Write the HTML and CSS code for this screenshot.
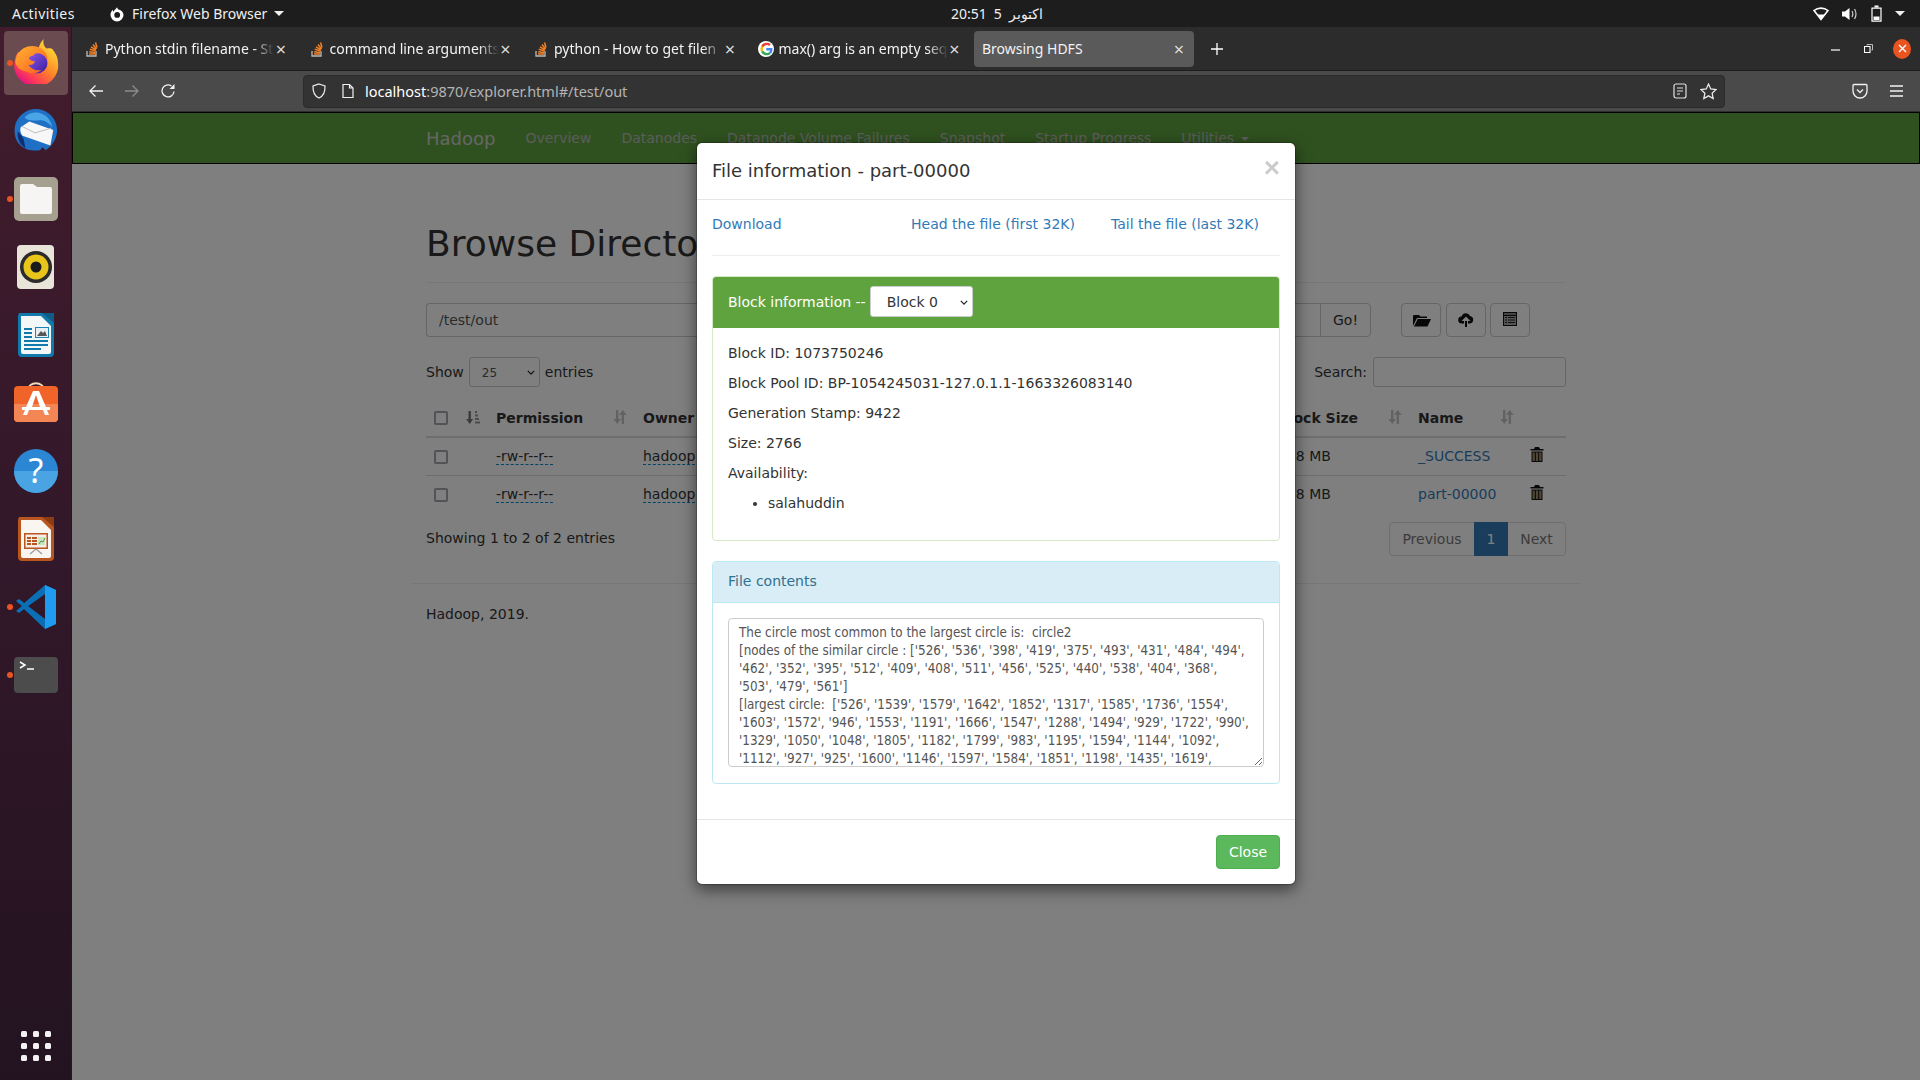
FILE: index.html
```html
<!DOCTYPE html>
<html lang="en">
<head>
<meta charset="utf-8">
<title>Browsing HDFS</title>
<link rel="stylesheet" href="styles.css">
</head>
<body>
<header class="topbar">
  <span class="activities">Activities</span>
  <span class="appmenu">
    <svg class="appicon" viewBox="0 0 16 16"><path fill="#fff" d="M8 1.2c.6 1 .5 1.700 1.500 2.200 3 .7 5 2.800 5 5.600a6.500 6.500 0 0 1-13 0c0-2.300 1-4 2.400-5.200-.1 1 .1 1.600.6 2 .5-1.500 2-2.500 3.500-4.600zM8.200 6a2.900 2.900 0 1 0 0 5.800 2.900 2.900 0 0 0 0-5.800z"/></svg>
    <span>Firefox Web Browser</span>
    <span class="tri"></span>
  </span>
  <span class="clock"><span>20:51</span><span>5</span><span dir="rtl">اكتوبر</span></span>
  <span class="status">
    <svg class="st-wifi" viewBox="0 0 16 14"><path fill="none" stroke="#fff" stroke-width="1.600" d="M1 3.500C5 .3 11 .3 15 3.500L8 12.500z"/><path fill="#fff" d="M4.500 7.500h7L8 12.500z"/></svg>
    <svg class="st-vol" viewBox="0 0 16 14"><path fill="#fff" d="M1 4.500h3L8.500 1v12L4 9.500H1z"/><path fill="none" stroke="#ccc" stroke-width="1.200" d="M11 4c1 1.800 1 4.200 0 6M13.500 2c1.800 3 1.800 7 0 10"/></svg>
    <svg class="st-bat" viewBox="0 0 11 17"><path fill="none" stroke="#fff" stroke-width="1.200" d="M1 3.200h9v13H1z"/><path fill="#fff" d="M3.500.5h4v2h-4zM2.500 11.500h6v3.500h-6z"/></svg>
    <span class="tri"></span>
  </span>
</header>

<div class="desktop">
  <nav class="dock">
    <div class="dock-item dock-active"><i class="dot"></i>
      <svg class="ic-46" viewBox="0 0 48 48">
        <defs>
          <linearGradient id="ff1" x1="0.800" y1="0.100" x2="0.200" y2="0.900"><stop offset="0" stop-color="#ffd93a"/><stop offset=".45" stop-color="#ff8a25"/><stop offset=".8" stop-color="#ff3d55"/><stop offset="1" stop-color="#e3177e"/></linearGradient>
          <linearGradient id="ff2" x1="0" y1="0" x2="1" y2="1"><stop offset="0" stop-color="#8f5cf0"/><stop offset="1" stop-color="#3b1a9c"/></linearGradient>
          <linearGradient id="ff3" x1="0" y1="0" x2="1" y2="1"><stop offset="0" stop-color="#ffb52e"/><stop offset="1" stop-color="#ff5a24"/></linearGradient>
        </defs>
        <path fill="url(#ff1)" d="M32 1c-1 5 .5 8 3 10 2.500-.5 5-.5 6 .5 4 5 6 9 6 14.500a23 22 0 1 1-45-3c.5-4 2-7 4-9 0 2 .5 3 1.500 4 2-4 6-7 11-8 3-.5 6 0 8 .5C28 7 29 4 32 1z"/>
        <circle cx="25" cy="26" r="11" fill="url(#ff2)"/>
        <path fill="url(#ff3)" d="M2.500 25c.5-6 3.500-11 9-14.500 5-3 12-3 17 0 5 3 8 8 7.500 13-2-4-5-7-10-7.500-2.500 0-4.500 1-5 2.500-4 .5-4.500 2-4 3.500 1 2 4 2 6 2.500-1 3-4 4-7 3.500 3 5 9 7 14 5-4 4-11 5-17 2C6 33 3 29 2.500 25z"/>
      </svg>
    </div>
    <div class="dock-item">
      <svg class="ic-46" viewBox="0 0 48 48">
        <path fill="#1f6fc4" d="M24 1c12 0 22 10 22 22 0 9-5 17-12 21l-3-3-3 3c-7 1-15 0-20-5-6-5-7-13-6-20C4 9 13 1 24 1z"/>
        <path fill="#0f2f73" d="M5 24c-1 8 2 14 8 18l-2-10z"/>
        <path fill="#4aa5e6" d="M12 10c4-5 12-7 18-4 6 2 10 8 11 14-4-5-9-8-15-7-5 0-10 1-14-3z"/>
        <path fill="#f7f7f7" d="M8 20l9-6 25 9-3 16-29-10c-2-2-3-6-2-9z"/>
        <path fill="none" stroke="#bbb" d="M9 19l14 7 17-5"/>
      </svg>
    </div>
    <div class="dock-item"><i class="dot"></i>
      <svg class="ic-46" viewBox="0 0 46 46">
        <rect x="1" y="1" width="44" height="44" rx="5" fill="#a5a08f"/>
        <path fill="#f6f5f3" d="M7 10a2 2 0 0 1 2-2h11l4 3h13a2 2 0 0 1 2 2v23a2 2 0 0 1-2 2H9a2 2 0 0 1-2-2z"/>
      </svg>
    </div>
    <div class="dock-item">
      <svg class="ic-46" viewBox="0 0 46 46">
        <rect x="4" y="1" width="37" height="44" rx="4" fill="#e8e4d8"/>
        <circle cx="23" cy="23" r="16" fill="#2b2b2b"/>
        <circle cx="23" cy="23" r="12.500" fill="#e9c41a"/>
        <circle cx="23" cy="23" r="5.500" fill="#1b1b1b"/>
      </svg>
    </div>
    <div class="dock-item">
      <svg class="ic-46" viewBox="0 0 46 46">
        <path fill="#1279ad" d="M6 1h26l9 9v31a4 4 0 0 1-4 4H9a4 4 0 0 1-4-4V4z"/>
        <path fill="#0d5d86" d="M29 1h12v10z"/>
        <path fill="#f4f7f8" d="M8 4h20l10 10v26a2 2 0 0 1-2 2H10a2 2 0 0 1-2-2z"/>
        <path fill="#1279ad" d="M11 16h8v2h-8zM11 20h8v2h-8zM11 24h8v2h-8zM11 28h24v2H11zM11 32h24v2H11zM11 36h17v2H11z"/>
        <path fill="#1b85b8" d="M22 15h14v11H22z"/><path fill="#e8eef1" d="M23 16h12v9H23z"/><path fill="#555" d="M24 24l4-5 2 2 2-2 2 5z"/>
      </svg>
    </div>
    <div class="dock-item">
      <svg class="ic-46" viewBox="0 0 46 46">
        <path fill="none" stroke="#f0d9b8" stroke-width="1.800" d="M15 10c0-9 16-9 16 0"/>
        <rect x="1" y="6" width="44" height="36" rx="4" fill="#f0642a"/>
        <path fill="#f48656" d="M1 24h44v14a4 4 0 0 1-4 4H5a4 4 0 0 1-4-4z"/>
        <path fill="#fff" d="M20 11h6l7 16h4v3h-3l2 5h-4l-2-5H16l-2 5h-4l2-5H9v-3h4zM23 15l-4 12h8z"/>
      </svg>
    </div>
    <div class="dock-item">
      <svg class="ic-46" viewBox="0 0 46 46">
        <circle cx="23" cy="23" r="22" fill="#2b86d4"/>
        <path fill="#4aa3e3" d="M1 23h44a22 22 0 0 1-44 0z"/>
        <text x="23" y="35" class="help-q">?</text>
      </svg>
    </div>
    <div class="dock-item">
      <svg class="ic-46" viewBox="0 0 46 46">
        <path fill="#b9551f" d="M6 1h26l9 9v31a4 4 0 0 1-4 4H9a4 4 0 0 1-4-4V4z"/>
        <path fill="#8a3c12" d="M29 1h12v10z"/>
        <path fill="#f9f6f2" d="M8 4h20l10 10v26a2 2 0 0 1-2 2H10a2 2 0 0 1-2-2z"/>
        <path fill="#b9551f" d="M11 17h24v16H11z"/><path fill="#f5ede6" d="M12.500 18.500h21v13h-21z"/>
        <path fill="#b9551f" d="M14 21h4v2h-4zM14 24h4v2h-4zM14 27h4v2h-4zM19 21h5v2h-5zM19 24h5v2h-5zM19 27h5v2h-5z"/>
        <path fill="#cde3c4" d="M25 21h7v8h-7z"/><path fill="none" stroke="#4b9a3a" d="M26 28l2-3 2 1 2-4"/>
        <path fill="none" stroke="#999" stroke-width="1.200" d="M23 33l-6 5M23 33l6 5"/>
      </svg>
    </div>
    <div class="dock-item"><i class="dot"></i>
      <svg class="ic-46" viewBox="0 0 46 46">
        <path fill="#0a6fb4" d="M3 17l3-2 9 7-9 7-3-2 6-5zM32 1l11 5v34l-11 5-21-20 4-3 17 13V10L14 23l-4-3z"/>
        <path fill="#1f9cf0" d="M32 1l11 5v34l-11 5z"/>
      </svg>
    </div>
    <div class="dock-item"><i class="dot"></i>
      <svg class="ic-46" viewBox="0 0 46 46">
        <rect x="1" y="5" width="44" height="36" rx="4" fill="#4c4c4c"/>
        <path fill="none" stroke="#fff" stroke-width="1.500" d="M7 10l5 3-5 3M14 17h7"/>
      </svg>
    </div>
    <div class="dock-grid"><i></i><i></i><i></i><i></i><i></i><i></i><i></i><i></i><i></i></div>
  </nav>

  <div class="browser">
    <div class="tabbar">
      <div class="tab"><svg class="favicon" viewBox="0 0 16 16"><use href="#so"/></svg><span class="tab-title">Python stdin filename - St</span><span class="tab-x">×</span></div>
      <div class="tab"><svg class="favicon" viewBox="0 0 16 16"><use href="#so"/></svg><span class="tab-title">command line arguments</span><span class="tab-x">×</span></div>
      <div class="tab"><svg class="favicon" viewBox="0 0 16 16"><use href="#so"/></svg><span class="tab-title">python - How to get filen</span><span class="tab-x">×</span></div>
      <div class="tab"><svg class="favicon" viewBox="0 0 16 16"><circle cx="8" cy="8" r="8" fill="#fff"/><path fill="none" stroke="#ea4335" stroke-width="2.400" d="M12 4a5.200 5.200 0 0 0-7.800 1.600"/><path fill="none" stroke="#fbbc05" stroke-width="2.400" d="M4.200 5.600a5.200 5.200 0 0 0 0 4.800"/><path fill="none" stroke="#34a853" stroke-width="2.400" d="M4.200 10.400A5.200 5.200 0 0 0 12 12"/><path fill="none" stroke="#4285f4" stroke-width="2.400" d="M12 12c1-1 1.400-2 1.300-3.800H8.300"/></svg><span class="tab-title">max() arg is an empty seq</span><span class="tab-x">×</span></div>
      <div class="tab tab-active"><span class="tab-title">Browsing HDFS</span><span class="tab-x">×</span></div>
      <svg class="newtab" viewBox="0 0 12 12"><path stroke="#fff" stroke-width="1.300" d="M6 0v12M0 6h12"/></svg>
      <div class="winctl">
        <svg class="w-min" viewBox="0 0 9 2"><path stroke="#fff" stroke-width="1.200" d="M0 1h9"/></svg>
        <svg class="w-max" viewBox="0 0 9 9"><path fill="none" stroke="#bbb" d="M3 1.500V.5h5.500V6H7.500"/><path fill="none" stroke="#fff" stroke-width="1.100" d="M.5 2.500h5.500v6H.5z"/></svg>
        <span class="w-close"><svg viewBox="0 0 9 9"><path stroke="#fff" stroke-width="1.400" d="M1 1l7 7M8 1L1 8"/></svg></span>
      </div>
    </div>

    <div class="toolbar">
      <svg class="tb-ic back" viewBox="0 0 16 16"><path fill="none" stroke="#f2f2f2" stroke-width="1.300" d="M15 8H2M7.500 2.500L2 8l5.500 5.500"/></svg>
      <svg class="tb-ic fwd" viewBox="0 0 16 16"><path fill="none" stroke="#8c8c8c" stroke-width="1.300" d="M1 8h13M8.500 2.500L14 8l-5.500 5.500"/></svg>
      <svg class="tb-ic reload" viewBox="0 0 16 16"><path fill="none" stroke="#f2f2f2" stroke-width="1.300" d="M14 8.500A6 6 0 1 1 11.500 3"/><path fill="#f2f2f2" d="M14.500 1v5h-5z"/></svg>
      <div class="urlbar">
        <svg class="u-shield" viewBox="0 0 16 16"><path fill="none" stroke="#f0f0f0" stroke-width="1.200" d="M8 1l6 2c.3 6-1.500 10-6 12C3.500 13 1.700 9 2 3z"/></svg>
        <svg class="u-doc" viewBox="0 0 16 16"><path fill="none" stroke="#f0f0f0" stroke-width="1.200" d="M3 1.500h6.500L13 5v9.500H3zM9.500 1.500V5H13"/></svg>
        <span class="u-text"><b>localhost</b>:9870/explorer.html#/test/out</span>
        <svg class="u-reader" viewBox="0 0 14 16"><rect x="1" y="1" width="12" height="14" rx="2" fill="none" stroke="#e0e0e0" stroke-width="1.200"/><path stroke="#e0e0e0" stroke-width="1.200" d="M4 5h6M4 8h6M4 11h3"/></svg>
        <svg class="u-star" viewBox="0 0 16 16"><path fill="none" stroke="#e8e8e8" stroke-width="1.200" d="M8 1l2.100 4.600 5 .6-3.700 3.400 1 5L8 12.100 3.600 14.600l1-5L.9 6.200l5-.6z"/></svg>
      </div>
      <svg class="tb-ic pocket" viewBox="0 0 16 16"><path fill="none" stroke="#f2f2f2" stroke-width="1.300" d="M2 1.500h12a1 1 0 0 1 1 1V8a7 7 0 0 1-14 0V2.500a1 1 0 0 1 1-1z"/><path fill="none" stroke="#f2f2f2" stroke-width="1.300" d="M5 6.500L8 9.500l3-3"/></svg>
      <svg class="tb-ic menu" viewBox="0 0 16 16"><path stroke="#f2f2f2" stroke-width="1.300" d="M2 3h13M2 8h13M2 13h13"/></svg>
    </div>

    <div class="viewport">
      <div class="navbar">
        <div class="container nav-row">
          <a class="brand">Hadoop</a>
          <a class="navlink">Overview</a>
          <a class="navlink">Datanodes</a>
          <a class="navlink">Datanode Volume Failures</a>
          <a class="navlink">Snapshot</a>
          <a class="navlink">Startup Progress</a>
          <a class="navlink">Utilities <i class="caret"></i></a>
        </div>
      </div>
      <main class="container">
        <div class="page-header"><h1>Browse Directory</h1></div>
        <div class="path-row">
          <div class="input-group">
            <input class="path-input" value="/test/out">
            <button class="btn go">Go!</button>
          </div>
          <div class="tools">
            <button class="btn tool"><svg class="t-folder" viewBox="0 0 18 14"><path fill="#111" d="M1 2h5l1.500 1.500H14V5H4L0 13V3a1 1 0 0 1 1-1zM4.700 6H18l-3.500 7.500H1z"/></svg></button>
            <button class="btn tool"><svg class="t-cloud" viewBox="0 0 16 14"><path fill="#111" d="M4 10.500a3.500 3.500 0 0 1-.5-7A4.500 4.500 0 0 1 12 3a3.800 3.800 0 0 1 0 7.500h-2V8h2.500L8 3.500 3.500 8H6v2.500z"/><path fill="#111" d="M7 8h2v6H7z"/></svg></button>
            <button class="btn tool"><svg class="t-list" viewBox="0 0 14 14"><path fill="#111" d="M0 0h14v14H0z"/><path fill="#888" d="M1 1h12v2H1z"/><path fill="#aaa" d="M1 4h12v9H1z"/><path fill="#222" d="M2 5h2v1H2zM5 5h7v1H5zM2 7.500h2v1H2zM5 7.500h7v1H5zM2 10h2v1H2zM5 10h7v1H5z"/></svg></button>
          </div>
        </div>
        <div class="dt-top">
          <div class="dt-length">Show
            <span class="sel sel-small"><select><option>25</option></select><svg viewBox="0 0 10 6"><path fill="none" stroke="#222" stroke-width="1.500" d="M1 1l4 4 4-4"/></svg></span>
            entries</div>
          <label class="dt-search">Search: <input></label>
        </div>
        <table class="table">
          <colgroup><col class="c1"><col class="c2"><col class="c3"><col class="c4"><col class="c5"><col class="c6"><col class="c7"><col class="c8"><col class="c9"><col class="c10"></colgroup>
          <thead>
            <tr>
              <th class="sortable first"><input type="checkbox"><svg class="sort dark" viewBox="0 0 14 14"><use href="#sorted"/></svg></th>
              <th class="sortable">Permission<svg class="sort" viewBox="0 0 14 14"><use href="#sortboth"/></svg></th>
              <th>Owner</th>
              <th></th>
              <th></th>
              <th></th>
              <th></th>
              <th class="sortable">Block Size<svg class="sort" viewBox="0 0 14 14"><use href="#sortboth"/></svg></th>
              <th class="sortable">Name<svg class="sort" viewBox="0 0 14 14"><use href="#sortboth"/></svg></th>
              <th></th>
            </tr>
          </thead>
          <tbody>
            <tr>
              <td><input type="checkbox"></td>
              <td><a class="editable">-rw-r--r--</a></td>
              <td><a class="editable">hadoop</a></td>
              <td></td>
              <td></td>
              <td></td>
              <td></td>
              <td>128 MB</td>
              <td><a class="link">_SUCCESS</a></td>
              <td><svg class="trash" viewBox="0 0 14 15"><use href="#trash"/></svg></td>
            </tr>
            <tr>
              <td><input type="checkbox"></td>
              <td><a class="editable">-rw-r--r--</a></td>
              <td><a class="editable">hadoop</a></td>
              <td></td>
              <td></td>
              <td></td>
              <td></td>
              <td>128 MB</td>
              <td><a class="link">part-00000</a></td>
              <td><svg class="trash" viewBox="0 0 14 15"><use href="#trash"/></svg></td>
            </tr>
          </tbody>
        </table>
        <div class="dt-bottom">
          <span>Showing 1 to 2 of 2 entries</span>
          <div class="pagination"><a>Previous</a><a class="current">1</a><a>Next</a></div>
        </div>
      </main>
      <div class="footer-line"></div>
      <div class="container footer-text">Hadoop, 2019.</div>

      <div class="backdrop"></div>
      <section class="modal">
        <header class="modal-header">
          <h4>File information - part-00000</h4>
          <span class="modal-x">×</span>
        </header>
        <div class="modal-body">
          <div class="file-links">
            <a class="mlink">Download</a>
            <a class="mlink">Head the file (first 32K)</a>
            <a class="mlink">Tail the file (last 32K)</a>
          </div>
          <hr>
          <div class="panel panel-success">
            <div class="panel-heading">Block information --
              <span class="sel sel-block"><select><option>Block 0</option></select><svg viewBox="0 0 10 6"><path fill="none" stroke="#222" stroke-width="1.500" d="M1 1l4 4 4-4"/></svg></span>
            </div>
            <div class="panel-body">
              <p>Block ID: 1073750246</p>
              <p>Block Pool ID: BP-1054245031-127.0.1.1-1663326083140</p>
              <p>Generation Stamp: 9422</p>
              <p>Size: 2766</p>
              <p>Availability:</p>
              <ul><li>salahuddin</li></ul>
            </div>
          </div>
          <div class="panel panel-info">
            <div class="panel-heading">File contents</div>
            <div class="panel-body">
              <textarea readonly>The circle most common to the largest circle is:  circle2
[nodes of the similar circle : ['526', '536', '398', '419', '375', '493', '431', '484', '494', '462', '352', '395', '512', '409', '408', '511', '456', '525', '440', '538', '404', '368', '503', '479', '561']
[largest circle:  ['526', '1539', '1579', '1642', '1852', '1317', '1585', '1736', '1554', '1603', '1572', '946', '1553', '1191', '1666', '1547', '1288', '1494', '929', '1722', '990', '1329', '1050', '1048', '1805', '1182', '1799', '983', '1195', '1594', '1144', '1092', '1112', '927', '925', '1600', '1146', '1597', '1584', '1851', '1198', '1435', '1619',</textarea>
            </div>
          </div>
        </div>
        <footer class="modal-footer"><button class="btn-close">Close</button></footer>
      </section>
    </div>
  </div>
</div>

<svg class="defs" width="0" height="0">
  <symbol id="so" viewBox="0 0 16 16"><path fill="none" stroke="#bcbbbb" stroke-width="1.300" d="M3 10v5h9v-5"/><path stroke="#f48024" stroke-width="1.500" d="M5 13h6M5.200 10.800l6 .6M5.800 8.300l5.800 1.600M7 5.800l5 3M9 3.500l3.500 4.500M11.500 1.500l1.500 5"/></symbol>
  <symbol id="sortboth" viewBox="0 0 14 14"><path d="M3 0h2.400v9H8L4.200 14 .4 9H3zM8.600 14V5H6l3.800-5 3.800 5H11v9z" fill="#c4c4c4"/></symbol>
  <symbol id="sorted" viewBox="0 0 14 14"><path d="M2.500 1h2.400v8h2.300L3.700 14 .2 9h2.300z" fill="#777"/><path d="M9 1h2v2H9zM9 4.500h3v2H9zM9 8h4v2H9zM9 11.500h5v2H9z" fill="#999"/></symbol>
  <symbol id="trash" viewBox="0 0 14 15"><path fill="#111" d="M5 0h4l1 2h3.500v1.500H.5V2H4z"/><path fill="#111" d="M1.500 4.500h11V15h-11z"/><path fill="#a08c68" d="M2.500 5.500h2.300v8.500H2.500zM5.850 5.500h2.300v8.500H5.850zM9.200 5.500h2.300v8.500H9.200z"/></symbol>
</svg>
</body>
</html>
```

FILE: styles.css
```css
* { box-sizing: border-box; }
html, body { margin: 0; height: 100%; }
body {
  width: 1920px; height: 1080px; overflow: hidden;
  font-family: "DejaVu Sans", sans-serif; font-size: 14px; color: #333;
  display: flex; flex-direction: column; background: #fff;
}
.defs { position: absolute; }

/* GNOME top bar */
.topbar {
  height: 27px; flex: none; background: #1d1d1d; color: #f0f0f0;
  display: flex; align-items: center; position: relative;
  font-family: "Noto Sans", sans-serif; font-size: 14px;
}
.activities { margin-left: 12px; width: 97px; letter-spacing: .45px; }
.appmenu { display: flex; align-items: center; gap: 7px; }
.appicon { width: 16px; height: 16px; }
.tri { width: 0; height: 0; border: 5px solid transparent; border-top: 5px solid #f0f0f0; border-bottom: 0; margin-left: 0; }
.clock { position: absolute; left: 951px; display: flex; gap: 7px; }
.status { margin-left: auto; display: flex; align-items: center; padding-right: 15px; }
.st-wifi { width: 16px; height: 14px; margin-right: 12px; }
.st-vol { width: 16px; height: 14px; margin-right: 14px; }
.st-bat { width: 11px; height: 17px; margin-right: 13px; }

.desktop { flex: 1; display: flex; min-height: 0; }

/* Dock */
.dock {
  width: 72px; flex: none; display: flex; flex-direction: column; align-items: center;
  background: linear-gradient(180deg, #421c2c 0%, #32182a 50%, #231320 100%);
  border-right: 1px solid #2a1620;
}
.dock-item { width: 64px; height: 68px; flex: none; display: flex; align-items: center; justify-content: center; position: relative; }
.dock-active { height: 64px; margin: 4px 0 2px; padding-bottom: 4px; background: #6a4b50; border-radius: 4px; }
.ic-46 { width: 46px; height: 46px; }
.dot { position: absolute; left: 3px; top: 50%; width: 6px; height: 6px; margin-top: -3px; border-radius: 50%; background: #e95420; }
.dock-grid {
  margin-top: auto; margin-bottom: 19px; width: 30px;
  display: grid; grid-template-columns: repeat(3, 6px); gap: 6px;
}
.dock-grid i { width: 6px; height: 6px; border-radius: 1.500px; background: #f2f2f2; }
.help-q { font-family: "Noto Sans", sans-serif; font-size: 34px; fill: #fff; text-anchor: middle; }

/* Browser chrome */
.browser { flex: 1; min-width: 0; display: flex; flex-direction: column; }
.tabbar {
  height: 44px; flex: none; background: #2c2c2c; border-bottom: 1px solid #1e1e1e;
  display: flex; align-items: center; padding: 0 0 0 4px; gap: 4.500px; position: relative;
  font-family: "Noto Sans", sans-serif; font-size: 14px; color: #f2f2f2;
}
.tab { width: 220px; height: 36px; flex: none; display: flex; align-items: center; padding: 0 8px 0 9px; border-radius: 4px; }
.tab-active { background: #5a5a5a; padding-left: 8px; }
.favicon { width: 16px; height: 16px; flex: none; margin-right: 4px; position: relative; left: -1px; }
.tab-title {
  flex: 1; min-width: 0; white-space: nowrap; overflow: hidden;
  -webkit-mask-image: linear-gradient(90deg, #000 88%, transparent 100%);
  mask-image: linear-gradient(90deg, #000 88%, transparent 100%);
}
.tab-active .tab-title { -webkit-mask-image: none; mask-image: none; }
.tab-x { width: 14px; flex: none; text-align: center; font-size: 18px; line-height: 18px; color: #ddd; }
.newtab { width: 12px; height: 12px; margin-left: 12px; }
.winctl { margin-left: auto; display: flex; align-items: center; padding-right: 9px; }
.w-min { width: 9px; height: 2px; margin-right: 24px; margin-top: 3px; }
.w-max { width: 9px; height: 9px; margin-right: 20px; }
.w-close { width: 18px; height: 20px; border-radius: 50%; background: #e95420; display: flex; align-items: center; justify-content: center; }
.w-close svg { width: 9px; height: 9px; }

.toolbar {
  height: 41px; flex: none; background: #4a4a4a; border-bottom: 1px solid #2e2e2e;
  display: flex; align-items: center; position: relative; padding-left: 16px;
  font-family: "Noto Sans", sans-serif; font-size: 14px;
}
.tb-ic { width: 16px; height: 16px; flex: none; }
.fwd { margin-left: 20px; }
.reload { margin-left: 20px; }
.urlbar {
  width: 1422px; height: 33px; flex: none;
  margin-left: 127px; background: #333; border: 1px solid #2a2a2a; border-radius: 4px;
  display: flex; align-items: center; padding: 0 7px 0 7px; color: #b4b4b4;
}
.u-shield { width: 16px; height: 16px; }
.u-doc { width: 16px; height: 16px; margin-left: 13px; }
.u-text { margin-left: 9px; font-size: 14.500px; }
.u-text b { font-weight: 400; color: #fff; }
.u-reader { width: 14px; height: 16px; margin-left: auto; }
.u-star { width: 17px; height: 17px; margin-left: 13px; }
.pocket { margin-left: 127px; }
.menu { margin-left: 20px; }

/* Page below the chrome */
.viewport { flex: 1; position: relative; overflow: hidden; background: #fff; }
.container { width: 1170px; margin: 0 auto; padding: 0 15px; }
.navbar { height: 52px; background: #5fa33e; border: 1px solid #000; }
.nav-row { display: flex; align-items: center; height: 50px; }
.brand { font-size: 18px; color: #ccc; margin-right: 30px; }
.navlink { color: #b8b8b8; margin-right: 30px; }
.caret { display: inline-block; width: 0; height: 0; border: 4px solid transparent; border-top: 4px solid #b8b8b8; border-bottom: 0; vertical-align: middle; margin-left: 2px; }
.page-header { margin-top: 60px; padding-bottom: 18px; border-bottom: 1px solid #eee; }
h1 { margin: 0; font-size: 36px; font-weight: 400; line-height: 40px; }
.path-row { display: flex; margin-top: 20px; gap: 30px; }
.input-group { display: flex; width: 945px; height: 34px; }
.path-input {
  flex: 1; border: 1px solid #ccc; border-right: 0; border-radius: 4px 0 0 4px; padding: 6px 12px;
  font: inherit; color: #555; background: #fff;
}
.btn { height: 34px; border: 1px solid #ccc; border-radius: 4px; background: #fff; color: #333; font: inherit; padding: 0; }
.go { width: 51px; border-radius: 0 4px 4px 0; }
.tools { display: flex; gap: 4.500px; }
.tool { width: 40px; display: flex; align-items: center; justify-content: center; }
.tool svg { width: 18px; height: 14px; }
.tool .t-folder { margin-left: 2px; }
.tool .t-cloud { margin-left: 1px; }
.tool .t-list { width: 14px; height: 14px; margin-top: -3px; }
.dt-top { display: flex; justify-content: space-between; align-items: center; margin-top: 20px; height: 30px; }
.dt-length { display: flex; align-items: center; gap: 5px; }
.sel { position: relative; display: inline-block; }
.sel select { appearance: none; -webkit-appearance: none; display: block; background: #fff; font-family: inherit; color: #555; }
.sel svg { position: absolute; width: 8px; height: 5px; top: 50%; margin-top: -2px; right: 5px; }
.sel-small select { width: 71px; height: 30px; border: 1px solid #ccc; border-radius: 3px; font-size: 12px; padding: 2px 12px 0; }
.sel-block select { width: 103px; height: 31px; border: 1px solid #ccc; border-radius: 3px; font-size: 14px; padding: 0 16px; color: #333; }
.dt-search { display: flex; align-items: center; gap: 6px; }
.dt-search input { width: 193px; height: 30px; border: 1px solid #ccc; border-radius: 3px; background: #fff; }
.table { width: 1140px; margin-top: 13px; border-collapse: collapse; table-layout: fixed; }
.c1 { width: 62px; } .c2 { width: 147px; } .c3 { width: 110px; } .c4 { width: 110px; } .c5 { width: 100px; }
.c6 { width: 175px; } .c7 { width: 140px; } .c8 { width: 140px; } .c9 { width: 112px; } .c10 { width: 44px; }
th { height: 37px; padding: 0 8px; text-align: left; font-weight: 700; border-bottom: 2px solid #ddd; position: relative; }
td { height: 38px; padding: 0 8px; border-top: 1px solid #ddd; }
thead + tbody tr:first-child td { border-top: 0; }
th input, td input {
  appearance: none; -webkit-appearance: none; display: block; margin: 0;
  width: 14px; height: 14px; border: 2px solid #a5a5ae; border-radius: 2px; background: #fff;
}
td input { margin-top: 2px; }
.sort { position: absolute; right: 8px; top: 10px; width: 14px; height: 14px; }
.editable { color: #333; border-bottom: 1px dashed #0088cc; }
.link { color: #337ab7; }
.trash { display: block; width: 14px; height: 15px; position: relative; top: -2px; }
.dt-bottom { display: flex; justify-content: space-between; margin-top: 9px; height: 34px; line-height: 32px; }
.pagination { display: flex; width: 177px; height: 34px; border: 1px solid #ddd; border-radius: 4px; color: #777; line-height: 32px; text-align: center; }
.pagination a { flex: 1; }
.pagination a:first-child { flex: none; width: 84px; }
.pagination .current { flex: none; width: 34px; margin: -1px 0; height: 34px; background: #337ab7; color: #fff; line-height: 34px; }
.footer-line { width: 1170px; margin: 27px auto 0; border-top: 1px solid #eee; }
.footer-text { margin-top: 20px; line-height: 20px; }

/* Modal */
.backdrop { position: absolute; inset: 0; background: rgba(0,0,0,.5); }
.modal {
  position: absolute; left: 624px; top: 30px; width: 600px; height: 743px;
  background: #fff; border: 1px solid rgba(0,0,0,.2); border-radius: 6px;
  box-shadow: 0 5px 15px rgba(0,0,0,.5); background-clip: padding-box;
  display: flex; flex-direction: column;
}
.modal-header { height: 57px; padding: 15px; border-bottom: 1px solid #e5e5e5; position: relative; }
.modal-header h4 { margin: 0; font-size: 18px; font-weight: 400; line-height: 26px; }
.modal-x { position: absolute; right: 15px; top: 10px; font-family: "Liberation Sans", sans-serif; font-size: 28px; font-weight: 700; line-height: 30px; color: #000; opacity: .2; }
.modal-body { padding: 14px 15px 15px; flex: 1; }
.file-links { display: grid; grid-template-columns: 199px 200px 1fr; line-height: 20px; }
.mlink { color: #337ab7; }
hr { margin: 21px 0 20px; border: 0; border-top: 1px solid #eee; }
.panel { border: 1px solid; border-radius: 4px; background: #fff; }
.panel-heading { border-radius: 3px 3px 0 0; }
.panel-success { border-color: #d6e9c6; height: 265px; margin-bottom: 20px; }
.panel-success .panel-heading { background: #5fa33e; color: #fff; height: 51px; padding: 0 15px 2px; display: flex; align-items: center; gap: 4px; }
.panel-success .panel-body { padding: 15px; }
.panel-body p { margin: 0 0 10px; line-height: 20px; }
.panel-body ul { margin: 3px 0 0; padding-left: 40px; line-height: 20px; }
.panel-info { border-color: #bce8f1; }
.panel-info .panel-heading { background: #d9edf7; color: #31708f; height: 41px; padding: 9px 15px 0; border-bottom: 1px solid #bce8f1; line-height: 20px; }
.panel-info .panel-body { padding: 15px; padding-bottom: 16px; }
textarea {
  display: block; width: 100%; height: 149px; border: 1px solid #ccc; border-radius: 4px; padding: 5px 12px 6px 10px;
  font-family: "DejaVu Sans", sans-serif; font-stretch: condensed; font-size: 13.330px; line-height: 18px; color: #555; background: #fff;
  overflow: hidden; resize: vertical;
}
.modal-footer { height: 65px; padding: 15px; border-top: 1px solid #e5e5e5; display: flex; justify-content: flex-end; }
.btn-close { width: 64px; height: 34px; background: #5cb85c; border: 1px solid #4cae4c; border-radius: 4px; color: #fff; font: inherit; padding: 0; }
```
